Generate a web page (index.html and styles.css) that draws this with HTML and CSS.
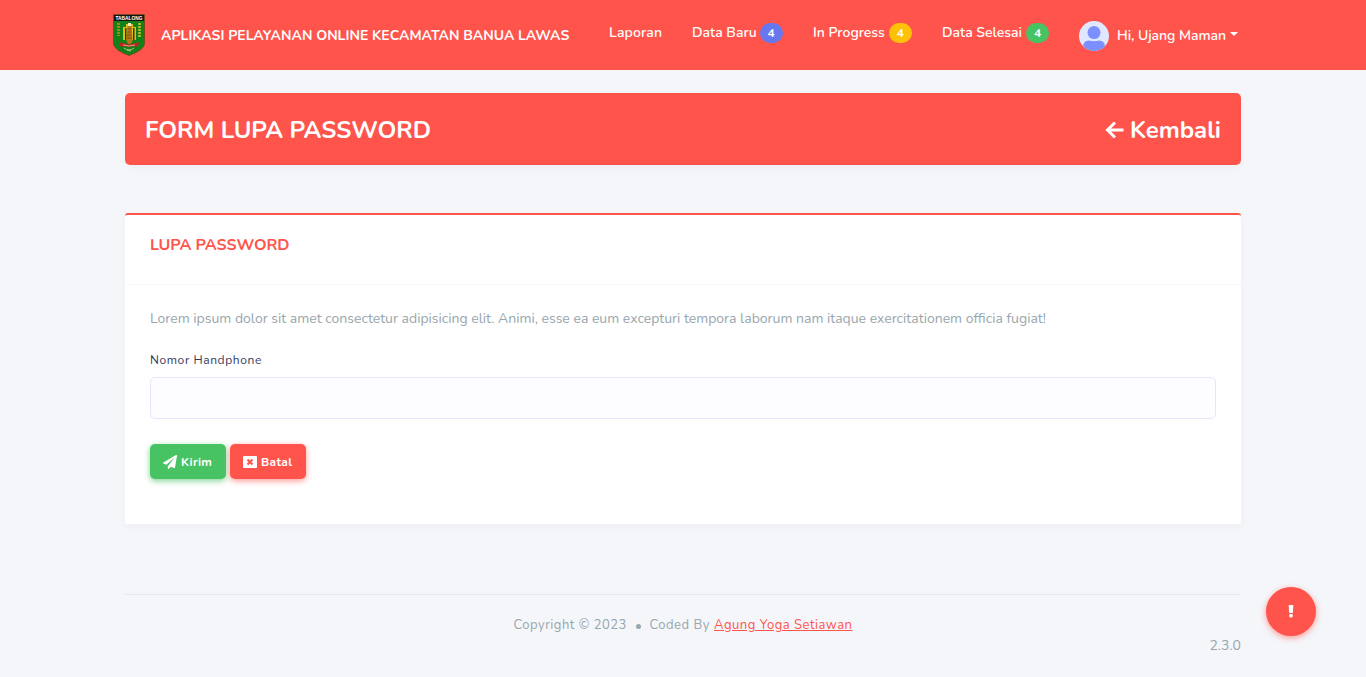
FILE: index.html
```html
<!DOCTYPE html>
<html lang="id">
<head>
<meta charset="utf-8">
<title>Form Lupa Password</title>
<link rel="stylesheet" href="styles.css">
</head>
<body>
<header class="navbar">
  <svg class="crest" viewBox="0 0 32 42">
    <path d="M.5.5h31v29.500Q31 36 16 41.500 1 36 .5 30z" fill="#138018" stroke="#7d4a1f"/>
    <path d="M1 1h30v6H1z" fill="#151515"/>
    <text x="16" y="5.800" class="crest-text" textLength="27" lengthAdjust="spacingAndGlyphs">TABALONG</text>
    <path d="M10 13h3v-3h7v3h3v13H10z" fill="#e2bd16"/>
    <path d="M15 9h3v3h-3z" fill="#f3edc0"/>
    <path d="M12 14h1.500v12H12zM20 14h1.500v12H20z" fill="#39380f"/>
    <path d="M14.500 12h4l1 15-2 3h-2l-2-3z" fill="#b57a18"/>
    <path d="M14.500 15h4M14.500 18h4M14 21h5M14 24h5" stroke="#6b4a12" stroke-width=".8"/>
    <path d="M5.500 9v13" stroke="#9c8b19" stroke-width="3" stroke-dasharray="2 1"/>
    <path d="M26.500 9v14" stroke="#c3bd20" stroke-width="2.500" stroke-dasharray="2 1"/>
    <path d="M6 28q3 2 5 1 5 3 10 0 2 1 5-1l-1 4q-3 1-5 0-4 2-8 0-2 1-5 0z" fill="#c81e20"/>
    <path d="M10 31q6 2 12 0" fill="none" stroke="#e6c1aa" stroke-width=".8"/>
    <path d="M11 34q5 4 10 0M14 36l4 1" fill="none" stroke="#b9c587"/>
  </svg>
  <span class="brand">APLIKASI PELAYANAN ONLINE KECAMATAN BANUA LAWAS</span>
  <nav class="nav">
    <a class="nav-link laporan">Laporan</a>
    <a class="nav-link baru"><span class="nav-text">Data Baru</span><b class="badge blue">4</b></a>
    <a class="nav-link progress"><span class="nav-text">In Progress</span><b class="badge yellow">4</b></a>
    <a class="nav-link selesai"><span class="nav-text">Data Selesai</span><b class="badge green">4</b></a>
  </nav>
  <div class="user">
    <svg class="avatar" viewBox="0 0 30 30"><defs><clipPath id="round"><circle cx="15" cy="15" r="15"/></clipPath></defs><g clip-path="url(#round)"><path d="M0 0h30v30H0z" fill="#dfe8ff"/><circle cx="15" cy="11.600" r="6.500" fill="#7c8fff"/><path d="M4 30v-4q0-6.500 6-6.500 5 1.500 10 0 6 0 6 6.500v4z" fill="#7c8fff"/></g></svg>
    <span class="user-name">Hi, Ujang Maman</span><i class="caret"></i>
  </div>
</header>
<main class="content">
  <section class="page-title">
    <h1 class="title">FORM LUPA PASSWORD</h1>
    <a class="back"><svg class="arrow" viewBox="0 0 20 20"><path d="M10 2.500 2.500 10l7.500 7.500M3 10h15.500" fill="none" stroke="#fff" stroke-width="3"/></svg><span>Kembali</span></a>
  </section>
  <section class="card">
    <div class="card-header"><h2 class="card-title">LUPA PASSWORD</h2></div>
    <form class="card-body">
      <p class="lead">Lorem ipsum dolor sit amet consectetur adipisicing elit. Animi, esse ea eum excepturi tempora laborum nam itaque exercitationem officia fugiat!</p>
      <label class="label" for="phone">Nomor Handphone</label>
      <input class="input" id="phone" type="text">
      <div class="actions">
        <button class="btn send" type="button"><svg class="plane" viewBox="0 0 512 512"><path fill="#fff" d="M476 3.200 12.500 270.600c-18.100 10.400-15.800 35.600 2.200 43.200L121 358.400l287.300-253.200c5.500-4.900 13.300 2.600 8.600 8.300L176 407v80.500c0 23.600 28.500 32.900 42.500 15.800L282 426l124.600 52.200c14.200 6 30.400-2.900 33-18.200l72-432C515 7.800 493.300-6.800 476 3.200z"/></svg><span class="send-text">Kirim</span></button>
        <button class="btn cancel" type="button"><svg class="cross" viewBox="0 0 14 12"><rect width="14" height="12" rx="1" fill="#fff"/><path d="m4.500 3.500 5 5m0-5-5 5" stroke="#ff544b" stroke-width="2"/></svg><span class="cancel-text">Batal</span></button>
      </div>
    </form>
  </section>
  <footer class="footer">
    <div class="credits"><span class="copy">Copyright © 2023</span><i class="bullet"></i><span class="coded">Coded By</span><a class="author">Agung Yoga Setiawan</a></div>
    <div class="version">2.3.0</div>
  </footer>
</main>
<button class="fab" type="button"><svg class="bang" viewBox="0 0 6 14"><path d="M.5 0h5L5 8.500H1z" fill="#fff"/><circle cx="3" cy="11.500" r="2" fill="#fff"/></svg></button>
</body>
</html>
```
FILE: styles.css
```css
* { box-sizing: border-box; }
body { margin: 0; height: 677px; overflow: hidden; background: #f4f6fa; color: #98a6ad; font-family: Nunito, Lato, sans-serif; font-size: 14px; }
h1, h2, p { margin: 0; }
span, a, h1, h2, p, label { white-space: nowrap; }
.navbar { height: 70px; padding-left: 113px; display: flex; align-items: center; background: #ff544b; color: #fff; }
.crest { width: 32px; height: 42px; flex: none; }
.crest-text { fill: #fff; font: bold 5px "Liberation Sans", sans-serif; text-anchor: middle; }
.brand { width: 449px; padding: 2px 0 0 16px; flex: none; font-weight: 700; line-height: 20px; }
.nav { display: flex; width: 470px; height: 20px; margin: 0 0 4px 15px; flex: none; }
.nav-link { display: flex; align-items: center; gap: 4px; font-weight: 600; flex: none; }
.nav-text { padding-bottom: 2px; }
.laporan { width: 83px; padding-bottom: 2px; letter-spacing: .15px; }
.baru { width: 121px; gap: 3px; }
.progress { width: 129px; }
.badge { display: flex; align-items: center; justify-content: center; width: 23px; height: 20px; border-radius: 10px; font-size: 12px; line-height: 12px; font-weight: 700; }
.blue { background: #6777ef; }
.yellow { background: #ffc107; }
.green { background: #47c363; }
.user { display: flex; align-items: center; font-weight: 600; padding-top: 1px; }
.avatar { width: 30px; height: 30px; margin-right: 8px; }
.user-name { letter-spacing: -.05px; }
.caret { margin: -4px 0 0 4px; border: 4px solid transparent; border-top-color: #fff; border-bottom: 0; }
.content { padding: 23px 125px 0; }
.page-title { height: 72px; padding: 2px 20px 0; display: flex; align-items: center; justify-content: space-between; border-radius: 5px; background: #ff544b; color: #fff; box-shadow: 0 4px 8px rgba(0,0,0,.03); }
.title, .back { font-size: 24px; font-weight: 700; line-height: 28px; }
.back { display: flex; align-items: center; gap: 5px; }
.arrow { width: 20px; height: 20px; }
.card { height: 311px; margin-top: 48px; border-top: 2px solid #ff544b; border-radius: 3px; background: #fff; box-shadow: 0 4px 8px rgba(0,0,0,.03); }
.card-header { height: 70px; padding: 16px 25px 0; border-bottom: 1px solid #f9f9f9; }
.card-title { color: #ff544b; font-size: 16px; line-height: 28px; font-weight: 700; letter-spacing: -.05px; }
.card-body { padding: 22px 25px; display: flex; flex-direction: column; align-items: flex-start; }
.lead { line-height: 24px; }
.label { margin-top: 19px; color: #34395e; font-size: 12px; line-height: 20px; letter-spacing: .6px; }
.input { width: 100%; height: 42px; margin-top: 7px; border: 1px solid #e4e6fc; border-radius: 5px; background: #fdfdff; }
.actions { display: flex; gap: 4px; margin-top: 25px; }
.btn { width: 76px; height: 35px; display: flex; align-items: center; gap: 4px; padding: 0 0 0 13px; border: 0; border-radius: 5px; color: #fff; font-family: inherit; font-size: 12px; font-weight: 700; letter-spacing: .3px; }
.send { background: #47c363; box-shadow: 0 2px 6px #81d694; }
.cancel { background: #ff544b; box-shadow: 0 2px 6px #fd9b96; }
.plane { width: 14px; height: 14px; flex: none; }
.cross { width: 14px; height: 12px; flex: none; }
.footer { margin-top: 70px; padding-top: 20px; border-top: 1px solid #e3eaef; }
.credits { display: flex; align-items: center; padding-left: 388.5px; height: 19px; margin-bottom: 2px; font-size: 13px; letter-spacing: .5px; }
.copy { width: 122px; }
.bullet { width: 5px; height: 5px; margin: 3px 9px 0 0; border-radius: 50%; background: #98a6ad; }
.coded { width: 64.5px; }
.author { color: #ff544b; text-decoration: underline; }
.version { text-align: right; line-height: 20px; }
.fab { position: absolute; left: 1266px; top: 587px; width: 50px; height: 49px; border: 0; padding: 0; border-radius: 50%; display: flex; align-items: center; justify-content: center; background: #ff544b; box-shadow: 0 2px 6px #fd9b96; }
.bang { width: 6px; height: 13px; }
```
